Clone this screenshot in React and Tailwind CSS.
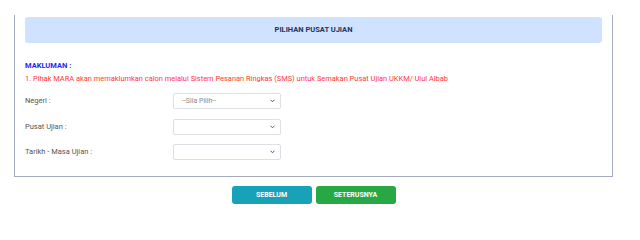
import React from "react";

function Chevron() {
  return (
    <svg width="5" height="4" viewBox="0 0 10 7" className="absolute right-[5px] top-1/2 -translate-y-1/2">
      <path d="M1.5 1.5l3.5 3.5 3.5-3.5" fill="none" stroke="#555" strokeWidth="2" strokeLinecap="round" strokeLinejoin="round" />
    </svg>
  );
}

function Sel({ text }) {
  return (
    <div className="relative w-[108px] h-[16px] border border-[#dcdfe4] rounded-[2px] bg-white flex items-center pl-[8px] text-[7px] text-[#8a8a8a]">
      {text}
      <Chevron />
    </div>
  );
}

function Row({ label, text }) {
  return (
    <div className="flex items-center h-[16px]">
      <div className="w-[148px] text-[7.5px] text-[#555]">{label}</div>
      <Sel text={text} />
    </div>
  );
}

export default function App() {
  return (
    <div className="w-[640px] h-[227px] bg-white" style={{ fontFamily: "Roboto, 'Liberation Sans', sans-serif" }}>
      <div className="ml-[14px] mt-[15px] w-[599px] border-l border-r border-b border-[#a4abbc] px-[10px] pt-[2px] pb-[16px]">
        <div className="h-[26px] bg-[#cfe2ff] rounded-[3px] flex items-center justify-center text-[7.5px] font-bold text-[#23335a]">
          PILIHAN PUSAT UJIAN
        </div>
        <div className="mt-[16px] text-[7.5px] font-bold text-[#2525ff] leading-[13px]">MAKLUMAN :</div>
        <div className="text-[8px] text-[#ff3838] leading-[13px] origin-left scale-x-[0.93] whitespace-nowrap">
          1. Pihak MARA akan memaklumkan calon melalui Sistem Pesanan Ringkas (SMS) untuk Semakan Pusat Ujian UKKM/ Ulul Albab
        </div>
        <div className="mt-[8px] flex flex-col gap-[9.5px]">
          <Row label="Negeri :" text="--Sila Pilih--" />
          <Row label="Pusat Ujian :" text="" />
          <Row label="Tarikh - Masa Ujian :" text="" />
        </div>
      </div>
      <div className="ml-[14px] w-[599px] mt-[9px] flex justify-center gap-[4px]">
        <div className="w-[80px] h-[18px] rounded-[3px] bg-[#17a2b8] flex items-center justify-center text-[7px] font-bold text-white">
          SEBELUM
        </div>
        <div className="w-[80px] h-[18px] rounded-[3px] bg-[#28a745] flex items-center justify-center text-[7px] font-bold text-white">
          SETERUSNYA
        </div>
      </div>
    </div>
  );
}
